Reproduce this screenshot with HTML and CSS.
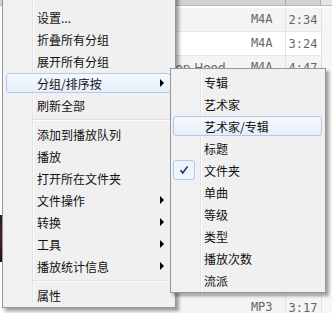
FILE: index.html
```html
<!doctype html>
<html lang="zh-CN">
<head>
    <meta charset="UTF-8">
    <link rel="stylesheet" href="styles.css">
    <title>播放列表菜单</title>
</head>
<body>
    <div class="window">
        <!-- playlist behind the menus -->
        <div class="list">
            <div class="list-head">
                <div class="h-title"></div>
                <div class="h-type"></div>
                <div class="h-time"></div>
                <div class="h-end"></div>
            </div>
            <div class="list-body">
                <div class="art-col"><div class="art"></div></div>
                <div class="rows">
                    <div class="row odd"><span class="c-title">Ahn</span><span class="c-type">M4A</span><span class="c-time">2:34</span></div>
                    <div class="row"><span class="c-title"></span><span class="c-type">M4A</span><span class="c-time">3:24</span></div>
                    <div class="row odd"><span class="c-title">Hilltop Hood</span><span class="c-type">M4A</span><span class="c-time">4:47</span></div>
                    <div class="row"><span class="c-title"></span><span class="c-type">M4A</span><span class="c-time">3:51</span></div>
                    <div class="row odd"><span class="c-title"></span><span class="c-type">M4A</span><span class="c-time">4:02</span></div>
                    <div class="row"><span class="c-title"></span><span class="c-type">M4A</span><span class="c-time">3:38</span></div>
                    <div class="row odd"><span class="c-title"></span><span class="c-type">M4A</span><span class="c-time">4:10</span></div>
                    <div class="row"><span class="c-title"></span><span class="c-type">MP3</span><span class="c-time">3:45</span></div>
                    <div class="row odd"><span class="c-title"></span><span class="c-type">MP3</span><span class="c-time">4:21</span></div>
                    <div class="row"><span class="c-title"></span><span class="c-type">MP3</span><span class="c-time">3:09</span></div>
                    <div class="row odd"><span class="c-title"></span><span class="c-type">MP3</span><span class="c-time">2:58</span></div>
                    <div class="row"><span class="c-title"></span><span class="c-type">MP3</span><span class="c-time">3:33</span></div>
                    <div class="row odd"><span class="c-title"></span><span class="c-type">MP3</span><span class="c-time">3:17</span></div>
                </div>
                <div class="scroll"></div>
            </div>
        </div>

        <!-- context menu -->
        <div class="menu main-menu">
            <div class="item">设置...</div>
            <div class="item">折叠所有分组</div>
            <div class="item">展开所有分组</div>
            <div class="item hot has-sub">分组/排序按</div>
            <div class="item">刷新全部</div>
            <div class="sep"></div>
            <div class="item">添加到播放队列</div>
            <div class="item">播放</div>
            <div class="item">打开所在文件夹</div>
            <div class="item has-sub">文件操作</div>
            <div class="item has-sub">转换</div>
            <div class="item has-sub">工具</div>
            <div class="item has-sub">播放统计信息</div>
            <div class="sep"></div>
            <div class="item">属性</div>
        </div>

        <!-- group / sort submenu -->
        <div class="menu sub-menu">
            <div class="item">专辑</div>
            <div class="item">艺术家</div>
            <div class="item hot">艺术家/专辑</div>
            <div class="item">标题</div>
            <div class="item checked">
                <span class="check">
                    <svg width="10" height="10" viewBox="0 0 10 10"><path d="M1.5 5.2 L3.8 8 L8.6 1.4" fill="none" stroke="#1f2a78" stroke-width="1.6"/></svg>
                </span>
                文件夹
            </div>
            <div class="item">单曲</div>
            <div class="item">等级</div>
            <div class="item">类型</div>
            <div class="item">播放次数</div>
            <div class="item">流派</div>
        </div>
    </div>
</body>
</html>
```

FILE: styles.css
```css
body {
    margin: 0;
    background: #fff;
}

.window {
    position: relative;
    width: 332px;
    height: 313px;
    overflow: hidden;
    background: #fff;
    font-family: "Noto Sans CJK SC", sans-serif;
}

/* playlist */

.list {
    display: flex;
    flex-direction: column;
    height: 100%;
}

.list-head {
    display: flex;
    flex-shrink: 0;
    height: 5px;
    background: #d2d2d2;
    border-bottom: 1px solid #b8b8b8;
}

.h-title {
    flex: 1;
}

.h-type {
    width: 60px;
    border-right: 1px solid #a8a8a8;
}

.h-time {
    width: 34px;
    border-right: 1px solid #a8a8a8;
}

.h-end {
    width: 11px;
    background: #e4e4e4;
}

.list-body {
    display: flex;
    flex: 1;
    min-height: 0;
    overflow: hidden;
    padding-top: 2px;
}

.art-col {
    width: 2px;
}

.art {
    margin-top: 207px;
    height: 47px;
    background: linear-gradient(#2a1a1a, #4a2626 40%, #1c1212);
}

.rows {
    flex: 1;
}

.row {
    display: flex;
    align-items: center;
    height: 24px;
    box-sizing: border-box;
    border-bottom: 1px solid #e6e6e6;
    font-family: "DejaVu Sans Mono", monospace;
    font-size: 12px;
    color: #666;
}

.row.odd {
    background: #f4f4f4;
}

.c-title {
    flex: 1;
    padding-left: 150px;
    white-space: nowrap;
    overflow: hidden;
    font-family: "DejaVu Sans", sans-serif;
}

.c-type {
    width: 60px;
    height: 100%;
    line-height: 23px;
    padding-right: 12px;
    box-sizing: border-box;
    text-align: right;
    border-right: 1px solid #e2e2e2;
}

.c-time {
    width: 35px;
    padding-left: 3px;
    box-sizing: border-box;
}

.scroll {
    width: 12px;
    background: #f6f6f6;
    border-left: 1px solid #e0e0e0;
}

/* menus */

.menu {
    position: absolute;
    display: flex;
    flex-direction: column;
    box-sizing: border-box;
    border: 1px solid #979797;
    background: linear-gradient(to right, #f1f1f1 0 29px, #e2e3e3 29px 30px, #fff 30px 31px, #f0f0f0 31px);
    box-shadow: 3px 3px 3px rgba(0, 0, 0, 0.35);
    font-size: 12px;
    color: #111;
}

.main-menu {
    left: 2px;
    top: -10px;
    width: 174px;
    padding: 15px 4px 1px 3px;
    z-index: 1;
}

.sub-menu {
    left: 170px;
    top: 68px;
    width: 156px;
    padding: 2px 3px 1px 2px;
    z-index: 2;
}

.item {
    position: relative;
    display: flex;
    align-items: center;
    height: 20px;
    margin: 1px 0;
    padding-left: 30px;
    box-sizing: border-box;
    border: 1px solid transparent;
    border-radius: 3px;
    white-space: nowrap;
}

.item.hot {
    border-color: #aecbee;
    background: linear-gradient(#f5f9fd, #e5eef9);
}

.has-sub::after {
    content: "";
    margin-left: auto;
    margin-right: 6px;
    border-left: 4px solid #000;
    border-top: 4px solid transparent;
    border-bottom: 4px solid transparent;
}

.sep {
    height: 7px;
    margin-left: 27px;
    background: linear-gradient(#f0f0f0 0 3px, #e0e0e0 3px 4px, #fff 4px 5px, #f0f0f0 5px);
}

.check {
    position: absolute;
    left: -1px;
    top: -1px;
    width: 22px;
    height: 20px;
    box-sizing: border-box;
    border: 1px solid #aecbee;
    border-radius: 3px;
    background: #eef4fc;
    display: flex;
    align-items: center;
    justify-content: center;
}
```
